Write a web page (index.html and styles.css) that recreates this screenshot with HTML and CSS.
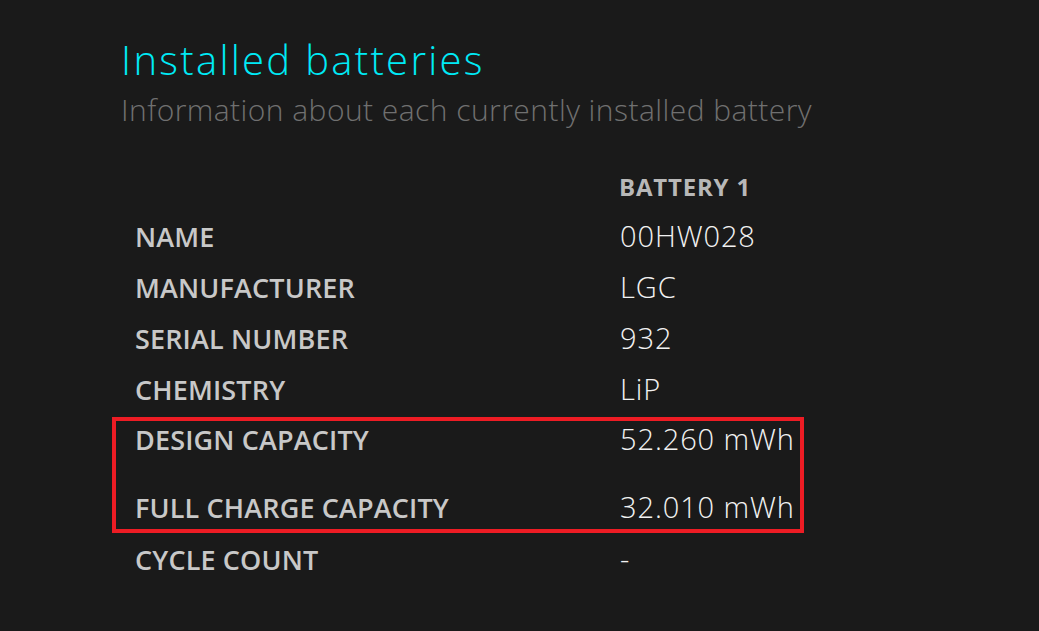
FILE: index.html
```html
<!DOCTYPE html>
<html lang="en">
<head>
    <meta charset="UTF-8">
    <title>Battery report</title>
    <link rel="stylesheet" href="styles.css">
</head>
<body>
    <div class="page">
        <h1>Installed batteries</h1>
        <p class="subtitle">Information about each currently installed battery</p>

        <div class="battery-table">
            <div class="row head">
                <span class="label"></span>
                <span class="col-title">BATTERY 1</span>
            </div>
            <div class="row">
                <span class="label">NAME</span>
                <span class="value">00HW028</span>
            </div>
            <div class="row">
                <span class="label">MANUFACTURER</span>
                <span class="value">LGC</span>
            </div>
            <div class="row">
                <span class="label">SERIAL NUMBER</span>
                <span class="value">932</span>
            </div>
            <div class="row">
                <span class="label">CHEMISTRY</span>
                <span class="value">LiP</span>
            </div>

            <!-- capacity rows, outlined in red -->
            <div class="highlight">
                <div class="row">
                    <span class="label">DESIGN CAPACITY</span>
                    <span class="value">52.260 mWh</span>
                </div>
                <div class="row">
                    <span class="label">FULL CHARGE CAPACITY</span>
                    <span class="value">32.010 mWh</span>
                </div>
            </div>

            <div class="row">
                <span class="label">CYCLE COUNT</span>
                <span class="value">-</span>
            </div>
        </div>
    </div>
</body>
</html>
```

FILE: styles.css
```css
body {
    margin: 0;
    background: #1a1a1a;
    font-family: "Open Sans", "Noto Sans", sans-serif;
}
.page {
    padding: 36px 0 0 121px;
}
h1 {
    margin: 0;
    font-size: 40px;
    line-height: 48px;
    font-weight: 300;
    letter-spacing: 2.3px;
    color: #00eaf6;
}
.subtitle {
    margin: 3px 0 0;
    font-size: 30px;
    line-height: 45px;
    font-weight: 300;
    letter-spacing: 0.45px;
    color: #707070;
}
.battery-table {
    margin: 29px 0 0 14px;
}
.row {
    display: flex;
    align-items: baseline;
    height: 51px;
    line-height: 51px;
}
.row.head {
    height: 49px;
}
.label {
    width: 485px;
    flex-shrink: 0;
    font-size: 27px;
    font-weight: 600;
    letter-spacing: 0.15px;
    color: #c8c8c8;
}
.value {
    font-size: 29px;
    font-weight: 300;
    letter-spacing: 0.9px;
    color: #f2f2f2;
}
.col-title {
    margin-left: -1px;
    font-size: 24px;
    font-weight: 700;
    letter-spacing: 0.8px;
    color: #b8b8b8;
}

/* red outline round the capacity rows */
.highlight {
    box-sizing: border-box;
    margin: 3px 0 0 -23px;
    width: 692px;
    padding: 0 0 4px 19px;
    border: 4px solid #ed1c24;
    display: flex;
    flex-direction: column;
    gap: 32px;
}
.highlight .row {
    height: 36px;
    line-height: 36px;
}
```
